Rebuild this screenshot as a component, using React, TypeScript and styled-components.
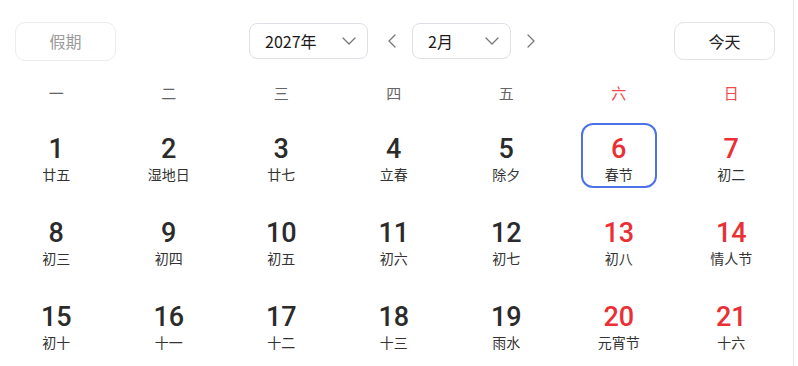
import styled, { createGlobalStyle } from 'styled-components';

type Day = {
  day: number;
  lunar: string;
  weekend?: boolean;
  selected?: boolean;
};

const weekdays = ['一', '二', '三', '四', '五', '六', '日'];

const days: Day[] = [
  { day: 1, lunar: '廿五' },
  { day: 2, lunar: '湿地日' },
  { day: 3, lunar: '廿七' },
  { day: 4, lunar: '立春' },
  { day: 5, lunar: '除夕' },
  { day: 6, lunar: '春节', weekend: true, selected: true },
  { day: 7, lunar: '初二', weekend: true },
  { day: 8, lunar: '初三' },
  { day: 9, lunar: '初四' },
  { day: 10, lunar: '初五' },
  { day: 11, lunar: '初六' },
  { day: 12, lunar: '初七' },
  { day: 13, lunar: '初八', weekend: true },
  { day: 14, lunar: '情人节', weekend: true },
  { day: 15, lunar: '初十' },
  { day: 16, lunar: '十一' },
  { day: 17, lunar: '十二' },
  { day: 18, lunar: '十三' },
  { day: 19, lunar: '雨水' },
  { day: 20, lunar: '元宵节', weekend: true },
  { day: 21, lunar: '十六', weekend: true },
];

const GlobalStyle = createGlobalStyle`
  html, body {
    margin: 0;
    padding: 0;
    background: #fff;
  }
  body {
    font-family: "Noto Sans", "Noto Sans CJK SC", sans-serif;
    color: #333;
  }
`;

function Chevron({ dir }: { dir: 'down' | 'left' | 'right' }) {
  const d =
    dir === 'down'
      ? 'M2 5 L8 11 L14 5'
      : dir === 'left'
      ? 'M10 2 L4 8 L10 14'
      : 'M6 2 L12 8 L6 14';
  return (
    <svg width="16" height="16" viewBox="0 0 16 16" fill="none">
      <path d={d} stroke="#777" strokeWidth="1.3" strokeLinecap="round" strokeLinejoin="round" />
    </svg>
  );
}

export default function App() {
  return (
    <>
      <GlobalStyle />
      <Page>
        <Toolbar>
          <GhostButton>假期</GhostButton>
          <Center>
            <Select $width={119}>
              <span>2027年</span>
              <Chevron dir="down" />
            </Select>
            <Arrow $left={15}>
              <Chevron dir="left" />
            </Arrow>
            <Select $width={99}>
              <span>2月</span>
              <Chevron dir="down" />
            </Select>
            <Arrow $left={9}>
              <Chevron dir="right" />
            </Arrow>
          </Center>
          <TodayButton>今天</TodayButton>
        </Toolbar>

        <WeekRow>
          {weekdays.map((w, i) => (
            <WeekDay key={w} $weekend={i >= 5}>
              {w}
            </WeekDay>
          ))}
        </WeekRow>

        <Grid>
          {days.map((d) => (
            <Cell key={d.day}>
              <DayBox $selected={d.selected}>
                <Num $weekend={d.weekend}>{d.day}</Num>
                <Lunar>{d.lunar}</Lunar>
              </DayBox>
            </Cell>
          ))}
        </Grid>
      </Page>
    </>
  );
}

const Page = styled.div`
  width: 794px;
  height: 366px;
  border-right: 1px solid #e8e8e8;
  box-sizing: border-box;
  overflow: hidden;
`;

const Toolbar = styled.div`
  display: flex;
  align-items: center;
  height: 38px;
  padding: 22px 18px 0 15px;
`;

const GhostButton = styled.div`
  width: 101px;
  height: 39px;
  box-sizing: border-box;
  border: 1px solid #ececec;
  border-radius: 10px;
  display: flex;
  align-items: center;
  justify-content: center;
  font-size: 16px;
  color: #9a9a9a;
  font-family: "Noto Sans CJK SC", sans-serif;
`;

const TodayButton = styled(GhostButton)`
  color: #222;
  border-color: #e3e3e3;
  height: 38px;
  margin-left: auto;
`;

const Center = styled.div`
  display: flex;
  align-items: center;
  margin-left: 133px;
`;

const Select = styled.div<{ $width: number }>`
  width: ${(p) => p.$width}px;
  height: 36px;
  box-sizing: border-box;
  border: 1px solid #dcdfe6;
  border-radius: 8px;
  display: flex;
  align-items: center;
  justify-content: space-between;
  padding: 0 10px 0 15px;
  font-size: 16px;
  color: #1a1a1a;
  font-family: "Noto Sans CJK SC", sans-serif;
`;

const Arrow = styled.div<{ $left: number }>`
  width: 20px;
  margin: 0 9px 0 ${(p) => p.$left}px;
  display: flex;
  justify-content: center;
  align-items: center;
`;

const WeekRow = styled.div`
  display: grid;
  grid-template-columns: repeat(7, 112.5px);
  margin-top: 23px;
  height: 20px;
`;

const WeekDay = styled.div<{ $weekend?: boolean }>`
  text-align: center;
  font-size: 15px;
  line-height: 20px;
  color: ${(p) => (p.$weekend ? '#f5484b' : '#666')};
  font-family: "Noto Sans CJK SC", sans-serif;
`;

const Grid = styled.div`
  display: grid;
  grid-template-columns: repeat(7, 112.5px);
  grid-auto-rows: 84px;
  margin-top: 20px;
`;

const Cell = styled.div`
  display: flex;
  justify-content: center;
  align-items: flex-start;
`;

const DayBox = styled.div<{ $selected?: boolean }>`
  width: 76px;
  height: 65px;
  box-sizing: border-box;
  border: 2px solid ${(p) => (p.$selected ? '#4d72e6' : 'transparent')};
  border-radius: 12px;
  display: flex;
  flex-direction: column;
  align-items: center;
  padding-top: 9px;
`;

const Num = styled.div<{ $weekend?: boolean }>`
  font-family: Roboto, "Noto Sans", sans-serif;
  font-size: 27px;
  font-weight: 500;
  line-height: 30px;
  color: ${(p) => (p.$weekend ? '#ea2f35' : '#2b2b2b')};
`;

const Lunar = styled.div`
  font-family: "Noto Sans CJK SC", sans-serif;
  font-size: 14px;
  line-height: 20px;
  color: #333;
`;
